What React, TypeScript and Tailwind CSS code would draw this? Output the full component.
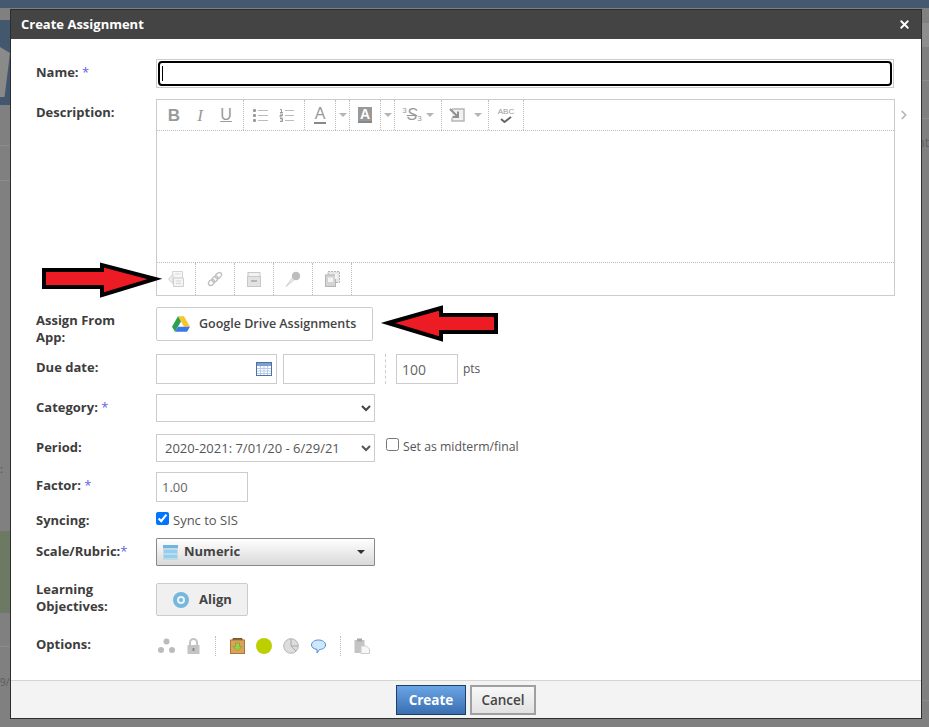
import type { ReactNode } from 'react'
import { ChevronRight, X } from 'lucide-react'

function Label({ children, required, className = 'pt-[5px]' }: { children: ReactNode; required?: boolean; className?: string }) {
  return (
    <div className={`w-[120px] shrink-0 text-[13px] leading-[17px] font-bold text-[#3d3d3d] ${className}`}>
      {children}
      {required && <span className="font-normal text-[#5f5fe6]"> *</span>}
    </div>
  )
}

function Sep() {
  return <div className="h-full w-0 border-l border-dotted border-[#bbb]" />
}

function Drop() {
  return <span className="h-0 w-0 border-x-[4px] border-t-[4px] border-x-transparent border-t-[#b5b5b5]" />
}

function Tool({ w, children }: { w: string; children: ReactNode }) {
  return <div className={`flex h-full items-center justify-center ${w}`}>{children}</div>
}

const glyph = "font-['Liberation_Sans',sans-serif] text-[#999] leading-none"

function BulletList() {
  return (
    <svg width="16" height="14" viewBox="0 0 16 14">
      <g fill="#999">
        <rect x="0" y="1" width="3" height="3" rx="1" />
        <rect x="0" y="6" width="3" height="3" rx="1" />
        <rect x="0" y="11" width="3" height="3" rx="1" />
      </g>
      <g fill="#bbb">
        <rect x="5" y="2" width="10" height="1" />
        <rect x="5" y="7" width="10" height="1" />
        <rect x="5" y="12" width="10" height="1" />
      </g>
    </svg>
  )
}

function NumberList() {
  return (
    <svg width="16" height="14" viewBox="0 0 16 14">
      <g fill="none" stroke="#999" strokeWidth="1">
        <path d="M1 1.5 H2.5 V4.5 M1 4.5 H4" />
        <path d="M1 6 H3.5 V7.5 H1 V9 H3.5" />
        <path d="M1 10.5 H3.5 V13.5 H1 M1.5 12 H3.5" />
      </g>
      <g fill="#bbb">
        <rect x="6" y="2" width="9" height="1" />
        <rect x="6" y="7" width="9" height="1" />
        <rect x="6" y="12" width="9" height="1" />
      </g>
    </svg>
  )
}

function IndentBox() {
  return (
    <svg width="16" height="14" viewBox="0 0 16 14">
      <path d="M3 1 H15 V13 H3 V10" fill="#f1f1f1" stroke="#b5b5b5" strokeWidth="1.5" />
      <path d="M1 1 L9 9 M9 3.5 V9 H3.5" fill="none" stroke="#8f8f8f" strokeWidth="2" />
    </svg>
  )
}

function FileLink() {
  return (
    <svg width="16" height="16" viewBox="0 0 16 16">
      <path d="M4.5 0.5 H14.5 V7 H4.5 Z" fill="#f7f7f7" stroke="#d4d4d4" />
      <path d="M0.5 8 L5 3 V13 Z" fill="#ececec" stroke="#d4d4d4" />
      <path d="M5.5 7 H15.5 V15.5 H5.5 Z" fill="#f4f4f4" stroke="#d0d0d0" />
      <path d="M8 10 H13 M8 12.5 H13 M7 3 H12" stroke="#d8d8d8" />
    </svg>
  )
}

function ChainLink() {
  return (
    <svg width="16" height="16" viewBox="0 0 16 16" fill="none" stroke="#c0c0c0" strokeWidth="1.4">
      <ellipse cx="4.5" cy="11.5" rx="2.4" ry="3.4" transform="rotate(45 4.5 11.5)" />
      <ellipse cx="8" cy="8" rx="2.4" ry="3.4" transform="rotate(45 8 8)" />
      <ellipse cx="11.5" cy="4.5" rx="2.4" ry="3.4" transform="rotate(45 11.5 4.5)" />
    </svg>
  )
}

function Archive() {
  return (
    <svg width="14" height="15" viewBox="0 0 14 15">
      <rect x="1" y="0.5" width="12" height="4" fill="#f2f2f2" stroke="#c8c8c8" />
      <rect x="0.5" y="4.5" width="13" height="10" fill="#e2e2e2" stroke="#c8c8c8" />
      <rect x="4" y="8" width="6" height="2" fill="#b5b5b5" />
    </svg>
  )
}

function Mic() {
  return (
    <svg width="16" height="16" viewBox="0 0 16 16">
      <path d="M1 15.5 L7.5 6.5 L9.5 8.5 Z" fill="#eee" stroke="#c8c8c8" strokeWidth="0.8" />
      <circle cx="11" cy="5" r="4.2" fill="#bdbdbd" />
    </svg>
  )
}

function Media() {
  return (
    <svg width="15" height="16" viewBox="0 0 15 16">
      <rect x="3" y="0.5" width="11.5" height="11" fill="#e6e6e6" stroke="#b5b5b5" strokeDasharray="2 1" />
      <rect x="0.5" y="4" width="10" height="11.5" fill="#d4d4d4" stroke="#b5b5b5" />
      <path d="M3 6.5 H8 V11 H3 Z M10 3 H12.5 V8 H10 Z" fill="#f4f4f4" />
    </svg>
  )
}

function DriveLogo() {
  return (
    <svg width="18" height="16" viewBox="0 0 18 15.5">
      <path d="M6 0 H12 L18 10.5 H12 Z" fill="#f7c62f" />
      <path d="M6 0 L9 5.25 L3 15.5 L0 10.5 Z" fill="#2f9e4f" />
      <path d="M3 15.5 L6 10.5 H18 L15 15.5 Z" fill="#3b78e7" />
    </svg>
  )
}

function CalendarIcon() {
  return (
    <svg width="16" height="14" viewBox="0 0 16 14">
      <rect x="0.5" y="0.5" width="15" height="13" fill="#fff" stroke="#4d6fa8" />
      <rect x="1" y="1" width="14" height="3" fill="#7f9fd0" />
      <path d="M1 6.5 H15 M1 9 H15 M1 11.5 H15 M4.5 4 V13 M8 4 V13 M11.5 4 V13" stroke="#b9cbe6" />
    </svg>
  )
}

function RubricIcon() {
  return (
    <svg width="15" height="15" viewBox="0 0 15 15">
      <rect width="15" height="15" fill="#c5d9e3" />
      <rect x="0" y="0" width="15" height="3" fill="#6fb5de" />
      <rect x="1" y="5" width="13" height="3" fill="#8fd0f2" />
      <rect x="1" y="10" width="13" height="3" fill="#8fd0f2" />
    </svg>
  )
}

function OptionIcons() {
  return (
    <div className="flex h-5 items-center">
      <svg width="17" height="16" viewBox="0 0 17 16" className="ml-[2px]">
        <g fill="#bbb">
          <circle cx="8.5" cy="3.5" r="3" />
          <circle cx="3" cy="12" r="3" />
          <circle cx="14" cy="12" r="3" />
        </g>
      </svg>
      <svg width="13" height="16" viewBox="0 0 13 16" className="ml-[12px]">
        <path d="M3 7 V4.5 a3.5 3.5 0 0 1 7 0 V7" fill="none" stroke="#c4c4c4" strokeWidth="2" />
        <rect x="0.5" y="7" width="12" height="9" fill="#c4c4c4" />
        <rect x="5.5" y="10" width="2" height="3" fill="#888" />
      </svg>
      <div className="ml-[15px] h-5 border-l border-dotted border-[#bbb]" />
      <svg width="15" height="16" viewBox="0 0 15 16" className="ml-[14px]">
        <path d="M2 2 L3 0 H12 L13 2 Z" fill="#7a5528" />
        <rect x="0.5" y="2" width="14" height="13.5" fill="#dba35a" stroke="#a8773a" />
        <path d="M5.5 5 H9.5 V8.5 H12 L7.5 13 L3 8.5 H5.5 Z" fill="#9ccf45" stroke="#6f9e2a" strokeWidth="0.6" />
      </svg>
      <div className="ml-[11px] h-4 w-4 rounded-full bg-[#bcd000]" />
      <svg width="16" height="16" viewBox="0 0 16 16" className="ml-[11px]">
        <circle cx="8" cy="8" r="7.3" fill="#ddd" stroke="#b5b5b5" />
        <path d="M8 1 V8 H15 M8 8 L13 13" fill="none" stroke="#a8a8a8" />
      </svg>
      <svg width="15" height="15" viewBox="0 0 15 15" className="ml-[12px]">
        <path d="M7.5 1 C11.5 1 14.5 3 14.5 6 C14.5 9 11.5 10.5 8.5 10.5 L6 14 L6 10.4 C3 10 0.5 8.6 0.5 6 C0.5 3 3.5 1 7.5 1 Z" fill="#cfe6fb" stroke="#4f8fd0" />
      </svg>
      <div className="ml-[14px] h-5 border-l border-dotted border-[#bbb]" />
      <svg width="16" height="16" viewBox="0 0 16 16" className="ml-[13px]">
        <rect x="0.5" y="2" width="10" height="13" fill="#c4c4c4" />
        <rect x="3" y="0.5" width="5" height="3" fill="#a8a8a8" />
        <path d="M7 8 H12.5 L15.5 11 V15.5 H7 Z" fill="#f7f7f7" stroke="#ccc" />
      </svg>
    </div>
  )
}

export default function App() {
  const inputCls = "h-full border border-[#ccc] bg-white px-2 text-[13px] text-[#666] outline-none font-['Open_Sans',sans-serif]"

  return (
    <div className="relative h-[727px] w-[929px] overflow-hidden bg-[#808080] font-['Open_Sans',sans-serif]">
      {/* page behind the modal */}
      <div className="h-[8px] bg-[#44586f]" />
      <div className="flex justify-between">
        <div className="w-[10px]">
          <div className="mt-[12px] h-[85px] bg-[#43586f]">
            <div className="h-[27px]" />
            <div className="h-[50px] bg-[#8a8a88] [clip-path:polygon(0_0,100%_12%,45%_100%,0_100%)]" />
          </div>
          <div className="mt-[40px] h-px bg-[#8c8c8c]" />
          <div className="mt-[34px] h-px bg-[#8c8c8c]" />
          <div className="mt-[281px] text-[11px] leading-[14px] text-[#42566f]">:</div>
          <div className="mt-[55px] h-[82px] bg-[#6d7a63]" />
          <div className="mt-[33px] h-px bg-[#8c8c8c]" />
          <div className="mt-[27px] text-[10px] leading-[16px] text-[#5a5a5a]">9/</div>
        </div>
        <div className="w-[7px]">
          <div className="mt-[15px] h-[24px] bg-[#8e8e8e]" />
          <div className="mt-[33px] h-px bg-[#8c8c8c]" />
          <div className="mt-[37px] h-px bg-[#8c8c8c]" />
          <div className="mt-[16px] flex justify-end text-[12px] leading-[16px] whitespace-nowrap text-[#5f5f5f]">nt</div>
          <div className="mt-[549px] h-px bg-[#8c8c8c]" />
        </div>
      </div>

      <div className="absolute top-[9px] left-[10px] flex h-[710px] w-[912px] flex-col border border-[#2d2d2d] bg-white">
        <div className="flex h-[29px] shrink-0 items-center justify-between bg-[#444] pr-[10px] pl-[10px] text-white">
          <span className="text-[13px] font-bold">Create Assignment</span>
          <X size={13} strokeWidth={3.5} />
        </div>

        <div className="flex flex-1 flex-col pt-5 pl-[25px]">
          <div className="flex h-[29px]">
            <Label required>Name:</Label>
            <div className="relative h-full w-[738px] border border-[#ccc] p-px">
              <input className="h-full w-full rounded-[4px] border-[2.5px] border-black bg-white outline-none" />
              <div className="absolute top-[6px] left-[5px] h-[15px] w-px bg-black" />
            </div>
          </div>

          <div className="mt-[11px] flex h-[197px]">
            <Label className="pt-[5px]">Description:</Label>
            <div className="flex h-full w-[739px] flex-col border border-[#ccc]">
              <div className="flex h-[31px] shrink-0 border-b border-dotted border-[#bbb]">
                <Tool w="w-[86px]">
                  <div className="flex w-full items-center pl-[4px]">
                    <span className={`${glyph} w-[26px] text-center text-[17px] font-bold text-[#8a8a8a]`}>B</span>
                    <span className={`${glyph} w-[26px] text-center font-['Liberation_Serif',serif] text-[17px] italic`}>I</span>
                    <span className={`${glyph} w-[26px] text-center text-[16px] underline`}>U</span>
                  </div>
                </Tool>
                <Sep />
                <Tool w="w-[60px] gap-[10px]">
                  <BulletList />
                  <NumberList />
                </Tool>
                <Sep />
                <Tool w="w-[30px]">
                  <span className={`${glyph} border-b-2 border-[#888] px-px text-[16px] text-[#888]`}>A</span>
                </Tool>
                <Sep />
                <Tool w="w-[13px]"><Drop /></Tool>
                <Sep />
                <Tool w="w-[30px]">
                  <span className={`${glyph} border-b-2 border-[#888] bg-[#999] px-[2px] text-[14px] font-bold text-white`}>A</span>
                </Tool>
                <Sep />
                <Tool w="w-[13px]"><Drop /></Tool>
                <Sep />
                <Tool w="w-[46px] gap-[4px]">
                  <span className={`${glyph} flex items-end`}>
                    <span className="self-start text-[8px]">3</span>
                    <span className="text-[16px] italic line-through">S</span>
                    <span className="text-[8px]">3</span>
                  </span>
                  <Drop />
                </Tool>
                <Sep />
                <Tool w="w-[46px] gap-[9px]">
                  <IndentBox />
                  <Drop />
                </Tool>
                <Sep />
                <Tool w="w-[34px]">
                  <div className="flex flex-col items-center">
                    <span className={`${glyph} text-[8px] text-[#666]`}>ABC</span>
                    <svg width="12" height="7" viewBox="0 0 12 7">
                      <path d="M1 3 L4.5 6 L11 1" fill="none" stroke="#666" strokeWidth="2" />
                    </svg>
                  </div>
                </Tool>
                <Sep />
              </div>
              <div className="flex-1" />
              <div className="flex h-[33px] shrink-0 border-t border-dotted border-[#bbb]">
                <Tool w="w-[38px]"><FileLink /></Tool>
                <Sep />
                <Tool w="w-[38px]"><ChainLink /></Tool>
                <Sep />
                <Tool w="w-[38px]"><Archive /></Tool>
                <Sep />
                <Tool w="w-[38px]"><Mic /></Tool>
                <Sep />
                <Tool w="w-[38px]"><Media /></Tool>
                <Sep />
              </div>
            </div>
            <ChevronRight size={14} strokeWidth={3} className="mt-[9px] ml-[2px] text-[#b5b5b5]" />
          </div>

          <div className="mt-[11px] flex h-[34px]">
            <Label>
              Assign From
              <br />
              App:
            </Label>
            <button className="flex h-full w-[217px] items-center rounded-[2px] border border-[#ccc] bg-white pl-[15px] text-[12.5px] font-semibold text-[#444]">
              <DriveLogo />
              <span className="ml-[9px]">Google Drive Assignments</span>
            </button>
          </div>

          <div className="mt-[13px] flex h-[30px]">
            <Label>Due date:</Label>
            <div className="relative h-full w-[121px]">
              <input className={`${inputCls} w-full`} />
              <div className="absolute top-2 right-[5px]"><CalendarIcon /></div>
            </div>
            <input className={`${inputCls} ml-[6px] w-[92px]`} />
            <div className="ml-[10px] h-full border-l border-dashed border-[#ccc]" />
            <input readOnly value="100" className={`${inputCls} ml-[10px] w-[62px] px-[5px] text-[14px]`} />
            <span className="ml-[5px] pt-[6px] text-[12px] leading-[17px] text-[#555]">pts</span>
          </div>

          <div className="mt-[10px] flex h-[28px]">
            <Label required>Category:</Label>
            <select className="h-full w-[219px] border border-[#ccc] bg-white text-[13px] text-[#444]" />
          </div>

          <div className="mt-[12px] flex h-[28px]">
            <Label>Period:</Label>
            <select className="h-full w-[219px] border border-[#ccc] bg-white px-[4px] text-[13px] text-[#555]">
              <option>2020-2021: 7/01/20 - 6/29/21</option>
            </select>
            <label className="ml-[11px] flex h-[20px] items-center gap-[4px] text-[12.25px] text-[#555]">
              <input type="checkbox" className="h-[13px] w-[13px]" />
              <span className="pt-[6px]">Set as midterm/final</span>
            </label>
          </div>

          <div className="mt-[10px] flex h-[30px]">
            <Label required>Factor:</Label>
            <input readOnly value="1.00" className={`${inputCls} w-[92px] px-[5px]`} />
          </div>

          <div className="mt-[10px] flex h-[13px]">
            <Label className="pt-0">Syncing:</Label>
            <label className="flex h-[13px] items-center gap-[4px] text-[13px] text-[#555]">
              <input type="checkbox" defaultChecked className="h-[13px] w-[13px]" />
              <span className="pt-[4px]">Sync to SIS</span>
            </label>
          </div>

          <div className="mt-[13px] flex h-[28px]">
            <Label className="pt-[5px] whitespace-nowrap">
              Scale/Rubric:<span className="font-normal text-[#5f5fe6]">*</span>
            </Label>
            <div className="flex h-full w-[219px] items-center rounded-[1px] border border-[#888] bg-gradient-to-b from-white to-[#d9d9d9] pr-[9px] pl-[6px]">
              <RubricIcon />
              <span className="ml-[6px] flex-1 text-[13px] font-bold text-[#444]">Numeric</span>
              <span className="h-0 w-0 border-x-[4px] border-t-[4px] border-x-transparent border-t-[#333]" />
            </div>
          </div>

          <div className="mt-[17px] flex h-[33px]">
            <Label className="-mt-[2px]">
              Learning
              <br />
              Objectives:
            </Label>
            <button className="flex h-full w-[92px] items-center rounded-[2px] border border-[#ccc] bg-[#f0f0f0] pl-[16px] text-[13px] font-bold text-[#444]">
              <span className="flex h-4 w-4 items-center justify-center rounded-full bg-[#76b7de]">
                <span className="flex h-2 w-2 items-center justify-center rounded-full bg-[#e8f4fb]">
                  <span className="h-1 w-1 rounded-full bg-[#76b7de]" />
                </span>
              </span>
              <span className="ml-[10px]">Align</span>
            </button>
          </div>

          <div className="mt-[20px] flex h-[20px]">
            <Label className="pt-0">Options:</Label>
            <OptionIcons />
          </div>
        </div>

        <div className="flex h-[38px] shrink-0 justify-end gap-1 border-t border-[#d4d4d4] bg-[#f3f3f4] pt-[4px] pr-[385px]">
          <button className="h-[30px] w-[70px] border border-[#1c3f66] bg-gradient-to-b from-[#6ba5e6] to-[#3a6fb0] text-[13.5px] font-bold text-white">
            Create
          </button>
          <button className="h-[30px] w-[66px] border-2 border-[#a0a0a0] bg-gradient-to-b from-[#f8f8f8] to-[#e2e2e2] text-[13.5px] font-semibold text-[#444]">
            Cancel
          </button>
        </div>
      </div>

      <svg className="pointer-events-none absolute inset-0" width="929" height="727" viewBox="0 0 929 727">
        <g fill="#ed1c24" stroke="#000" strokeWidth="4" strokeLinejoin="miter">
          <polygon points="44,270 102,270 102,265 155,279 102,295 102,287 44,287" />
          <polygon points="388,323 441,308 441,315 496,315 496,332 441,332 441,339" />
        </g>
      </svg>
    </div>
  )
}
